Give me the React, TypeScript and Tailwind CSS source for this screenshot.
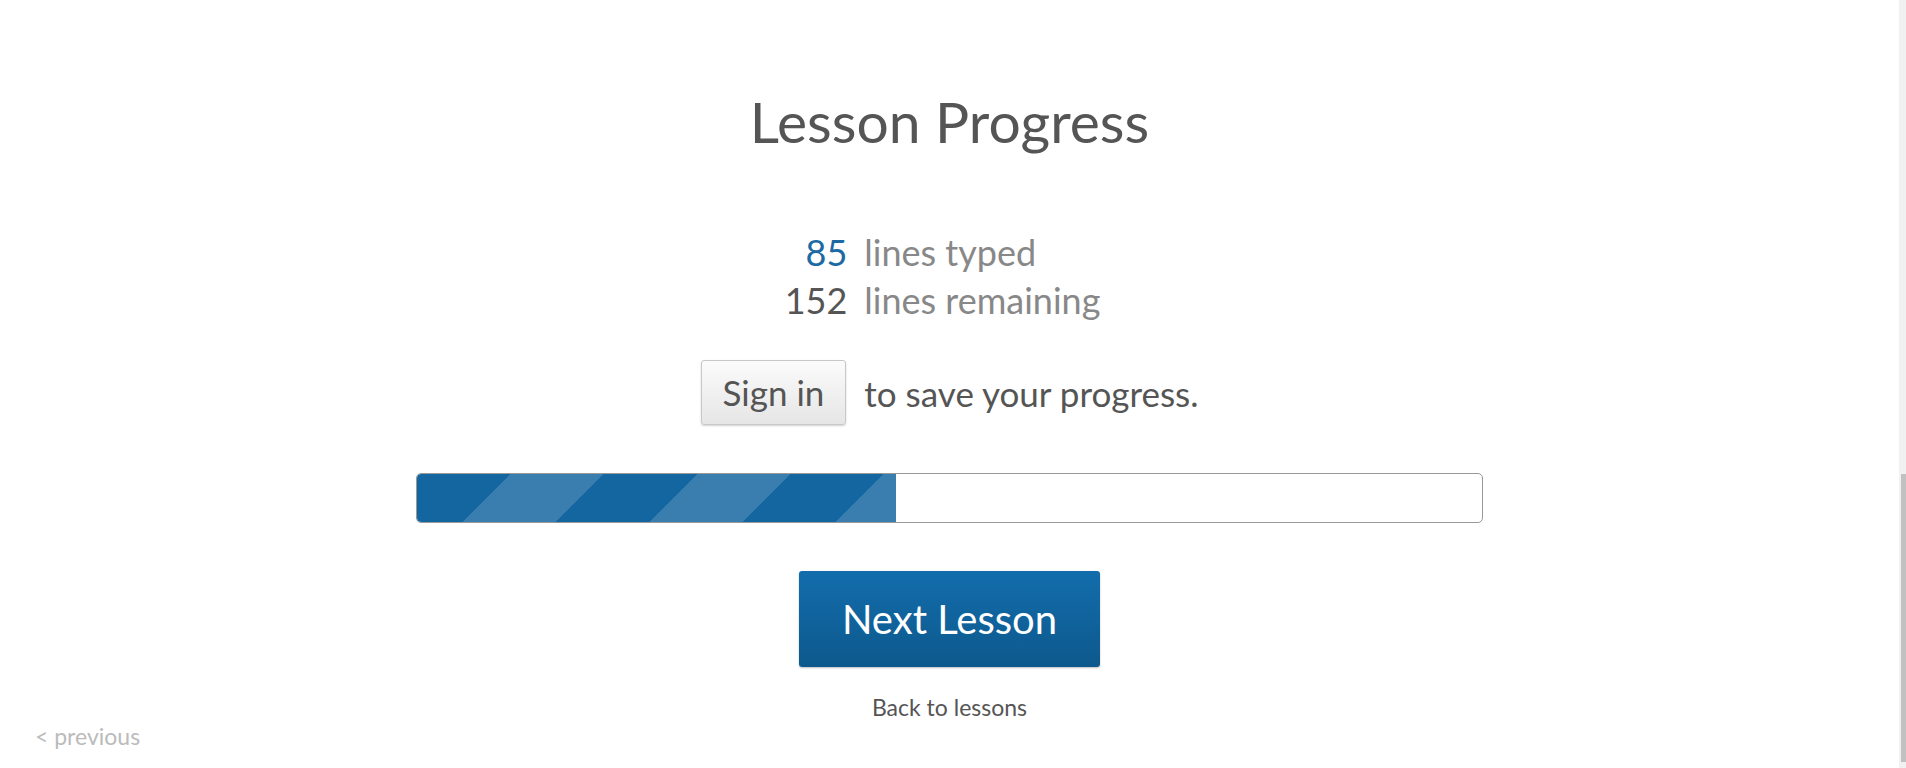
export default function App() {
  return (
    <div className="flex h-screen w-full overflow-hidden bg-white font-[Lato,'Liberation_Sans',sans-serif]">
      <main className="flex flex-1 flex-col items-center">
        <h1 className="mt-[86px] text-[57px] font-normal leading-[70px] text-[#555]">Lesson Progress</h1>

        <div className="mt-[72px] mr-[14px] grid grid-cols-[auto_auto] gap-x-[17px] text-[36px] leading-[48px]">
          <span className="text-right text-[#1b6aa3]">85</span>
          <span className="text-[#888]">lines typed</span>
          <span className="text-right text-[#555]">152</span>
          <span className="text-[#888]">lines remaining</span>
        </div>

        <div className="mt-[36px] flex items-center gap-[18px] text-[35px] text-[#555]">
          <button className="rounded-[3px] border border-[#c8c8c8] bg-linear-to-b from-[#fbfbfb] to-[#e6e6e6] px-[21px] pt-[10px] pb-[11px] leading-[42px] text-[#555] shadow-[0_1px_2px_rgba(0,0,0,0.18)]">
            Sign in
          </button>
          <span className="leading-[42px]">to save your progress.</span>
        </div>

        <div className="mt-[48px] h-[50px] w-[1067px] overflow-hidden rounded-[5px] border border-[#999] bg-white">
          <div className="h-full w-[479px] rounded-l-[4px] bg-[image:repeating-linear-gradient(135deg,#1466a1_0px,#1466a1_66px,#3a7eb0_66px,#3a7eb0_132px)]" />
        </div>

        <button className="mt-[48px] w-[301px] rounded-[3px] bg-linear-to-b from-[#136dac] to-[#0d598d] py-[24px] text-center text-[40px] leading-[48px] text-white shadow-[0_1px_2px_rgba(0,0,0,0.25)]">
          Next Lesson
        </button>

        <a className="mt-[26px] text-[23px] leading-[28px] text-[#555]">Back to lessons</a>

        <a className="mt-[1px] self-start pl-[35px] text-[23px] leading-[28px] text-[#bbb]">&lt; previous</a>
      </main>

      <div className="flex w-[7px] flex-col bg-[#f1f1f1]">
        <div className="mt-[474px] ml-[2px] h-[288px] w-[5px] bg-[#c1c1c1]" />
      </div>
    </div>
  );
}
